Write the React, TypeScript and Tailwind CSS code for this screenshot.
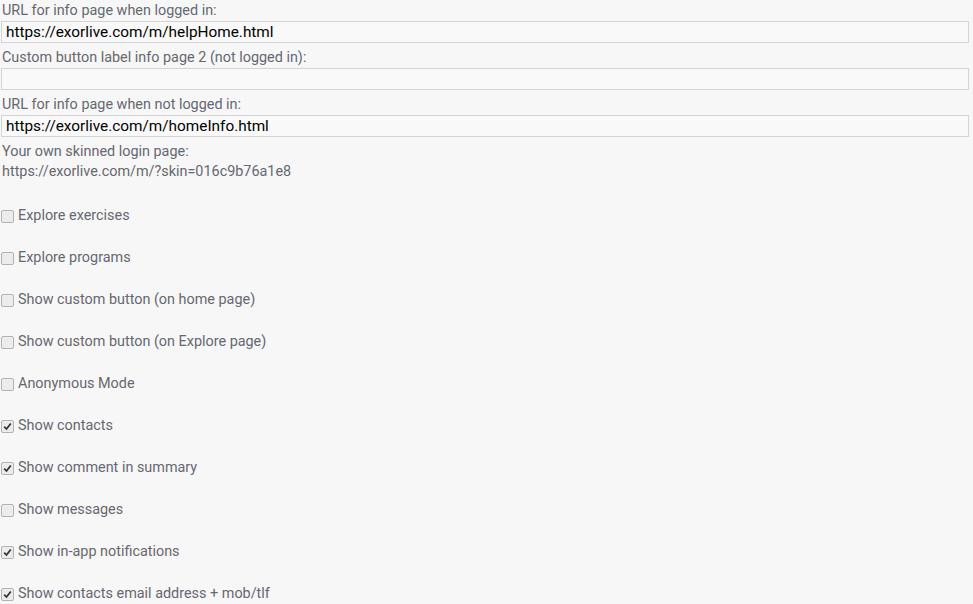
const FIELDS = [
  { label: "URL for info page when logged in:", value: "https://exorlive.com/m/helpHome.html" },
  { label: "Custom button label info page 2 (not logged in):", value: "" },
  { label: "URL for info page when not logged in:", value: "https://exorlive.com/m/homeInfo.html" },
];

const OPTIONS: { label: string; checked: boolean }[] = [
  { label: "Explore exercises", checked: false },
  { label: "Explore programs", checked: false },
  { label: "Show custom button (on home page)", checked: false },
  { label: "Show custom button (on Explore page)", checked: false },
  { label: "Anonymous Mode", checked: false },
  { label: "Show contacts", checked: true },
  { label: "Show comment in summary", checked: true },
  { label: "Show messages", checked: false },
  { label: "Show in-app notifications", checked: true },
  { label: "Show contacts email address + mob/tlf", checked: true },
];

function Box({ checked }: { checked: boolean }) {
  return (
    <span className="w-[13px] h-[13px] shrink-0 rounded-[2px] border border-[#b3b3b3] bg-[#ececec] flex items-center justify-center">
      {checked && (
        <svg width="9" height="9" viewBox="0 0 9 9">
          <path d="M1.2 4.6 L3.5 7 L7.8 1.5" fill="none" stroke="#333" strokeWidth="1.8" />
        </svg>
      )}
    </span>
  );
}

export default function App() {
  return (
    <div className="w-[973px] h-[604px] overflow-hidden bg-[#f7f7f7] text-[14.4px] text-[#666870] font-['Roboto',sans-serif] pl-[1px]">
      {FIELDS.map((f, i) => (
        <div key={i} className="mb-[4px]">
          <div className="h-[21px] pt-[1px] leading-[20px] pl-[1px]">{f.label}</div>
          <div className="w-[968px] h-[22px] border border-[#d4d4d4] bg-[#f9f9f9] pl-[4px] leading-[20px] text-[15.35px] text-black">
            {f.value}
          </div>
        </div>
      ))}
      <div className="pl-[1px] pt-[1px]">
        <div className="h-[20px] leading-[20px]">Your own skinned login page:</div>
        <div className="h-[20px] leading-[20px]">https://exorlive.com/m/?skin=016c9b76a1e8</div>
      </div>
      <div className="mt-[24px] flex flex-col gap-[22px]">
        {OPTIONS.map((o) => (
          <label key={o.label} className="h-[20px] flex items-center gap-[4px]">
            <Box checked={o.checked} />
            <span className="leading-[20px]">{o.label}</span>
          </label>
        ))}
      </div>
    </div>
  );
}
